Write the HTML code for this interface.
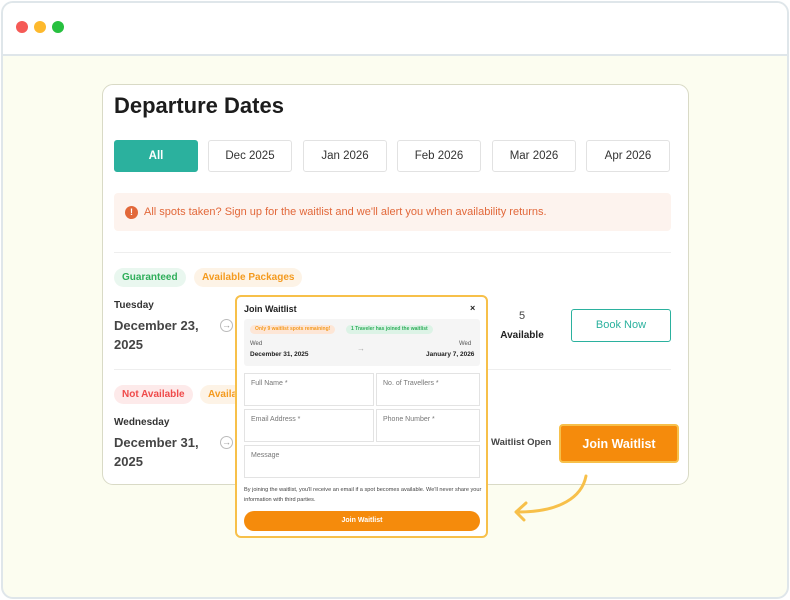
<!DOCTYPE html>
<html><head><style>
*{box-sizing:border-box;margin:0;padding:0}
body{width:790px;height:600px;background:#fff;font-family:"Liberation Sans",sans-serif;position:relative;overflow:hidden}
.a{position:absolute}
.frame{left:1px;top:1px;width:788px;height:598px;border:2px solid #dfe6ea;border-radius:12px;background:#fcfdf0;overflow:hidden}
.bar{left:0;top:0;width:784px;height:53px;background:#fff;border-bottom:2px solid #dfe6ea}
.dot{width:12px;height:12px;border-radius:50%;top:18px}
.card{left:102px;top:84px;width:587px;height:401px;background:#fff;border:1px solid #d9dac6;border-radius:11px}
.tab{top:140px;width:84px;height:32px;border:1px solid #e2e2e2;border-radius:3px;font-size:11.5px;color:#333;text-align:center;line-height:31px}
.pill{height:19px;border-radius:10px;font-size:10px;font-weight:bold;line-height:19px;padding:0 8px}
.t{color:#333}
.circ{width:13px;height:13px;border:1px solid #bbb;border-radius:50%;font-size:9px;color:#999;text-align:center;line-height:11px}
.fld{border:1px solid #e3e3e3;font-size:7px;color:#777;padding:6px 6px;background:#fff}
</style></head><body>
<div class="a frame">
<div class="a bar"></div>
<div class="a dot" style="left:13px;background:#f55a56"></div>
<div class="a dot" style="left:31px;background:#fdb92d"></div>
<div class="a dot" style="left:49px;background:#27c03f"></div>
</div>
<div class="a card"></div>
<div class="a" style="left:114px;top:93px;font-size:22px;font-weight:bold;color:#1c1c1c">Departure Dates</div>
<div class="a tab" style="left:114px;background:#2bb19e;border-color:#2bb19e;color:#fff;font-weight:bold">All</div>
<div class="a tab" style="left:208px">Dec 2025</div>
<div class="a tab" style="left:303px">Jan 2026</div>
<div class="a tab" style="left:397px">Feb 2026</div>
<div class="a tab" style="left:492px">Mar 2026</div>
<div class="a tab" style="left:586px">Apr 2026</div>
<div class="a" style="left:114px;top:193px;width:557px;height:38px;background:#fdf3ee;border-radius:4px"></div>
<div class="a" style="left:125px;top:206px;width:13px;height:13px;border-radius:50%;background:#e2683a;color:#fff;font-size:9px;font-weight:bold;text-align:center;line-height:13px">!</div>
<div class="a" style="left:144px;top:206px;font-size:11px;color:#e2683a">All spots taken? Sign up for the waitlist and we'll alert you when availability returns.</div>
<div class="a" style="left:114px;top:252px;width:557px;height:1px;background:#eee"></div>
<div class="a pill" style="left:114px;top:268px;background:#e9f7ef;color:#2fae5a">Guaranteed</div>
<div class="a pill" style="left:194px;top:268px;background:#fdf3e6;color:#f49a1e">Available Packages</div>
<div class="a t" style="left:114px;top:300px;font-size:10px;font-weight:bold">Tuesday</div>
<div class="a t" style="left:114px;top:316px;font-size:13px;font-weight:bold;line-height:19px;color:#444">December 23,<br>2025</div>
<div class="a circ" style="left:220px;top:319px">→</div>
<div class="a t" style="left:497px;top:307px;width:50px;text-align:center;font-size:11px;line-height:19px"><span style="color:#444">5</span><br><b style="font-size:10px;color:#222">Available</b></div>
<div class="a" style="left:571px;top:309px;width:100px;height:33px;border:1.5px solid #2bb19e;border-radius:3px;color:#2bb19e;font-size:11px;text-align:center;line-height:31px">Book Now</div>
<div class="a" style="left:114px;top:369px;width:557px;height:1px;background:#eee"></div>
<div class="a pill" style="left:114px;top:385px;background:#fdeaea;color:#ef4a4a">Not Available</div>
<div class="a pill" style="left:200px;top:385px;background:#fdf3e6;color:#f49a1e">Available Packages</div>
<div class="a t" style="left:114px;top:417px;font-size:10px;font-weight:bold">Wednesday</div>
<div class="a t" style="left:114px;top:433px;font-size:13px;font-weight:bold;line-height:19px;color:#444">December 31,<br>2025</div>
<div class="a circ" style="left:220px;top:436px">→</div>
<div class="a" style="left:491px;top:437px;font-size:9.5px;font-weight:bold;color:#444">Waitlist Open</div>
<div class="a" style="left:559px;top:424px;width:120px;height:39px;background:#f58b0c;border:2px solid #f7c04a;border-radius:4px;color:#fff;font-size:12.5px;font-weight:bold;text-align:center;line-height:36px">Join Waitlist</div>
<svg class="a" style="left:510px;top:472px" width="80" height="50"><path d="M76 4 C72 25 50 40 8 40" fill="none" stroke="#f7c04a" stroke-width="3" stroke-linecap="round"/><path d="M16 31 L6 40 L14 48" fill="none" stroke="#f7c04a" stroke-width="3" stroke-linecap="round" stroke-linejoin="round"/></svg>
<div class="a" style="left:235px;top:295px;width:253px;height:243px;background:#fff;border:2px solid #f7c04a;border-radius:6px"></div>
<div class="a" style="left:244px;top:304px;font-size:9px;font-weight:bold;color:#222">Join Waitlist</div>
<div class="a" style="left:470px;top:303px;font-size:9px;font-weight:bold;color:#222">×</div>
<div class="a" style="left:244px;top:319px;width:236px;height:47px;background:#f5f5f5;border-radius:3px"></div>
<div class="a" style="left:250px;top:325px;height:9px;padding:0 5px;border-radius:5px;background:#fde6d6;color:#f49a1e;font-size:5px;font-weight:bold;line-height:9px">Only 9 waitlist spots remaining!</div>
<div class="a" style="left:346px;top:325px;height:9px;padding:0 5px;border-radius:5px;background:#dcf3e6;color:#2fae5a;font-size:5px;font-weight:bold;line-height:9px">1 Traveler has joined the waitlist</div>
<div class="a" style="left:250px;top:341px;font-size:6px;color:#555">Wed</div>
<div class="a" style="left:250px;top:351px;font-size:6.5px;font-weight:bold;color:#222">December 31, 2025</div>
<div class="a" style="left:357px;top:344px;font-size:8px;color:#aaa">→</div>
<div class="a" style="left:459px;top:341px;font-size:6px;color:#555">Wed</div>
<div class="a" style="left:426px;top:351px;font-size:6.5px;font-weight:bold;color:#222">January 7, 2026</div>
<div class="a fld" style="left:244px;top:373px;width:130px;height:33px">Full Name *</div>
<div class="a fld" style="left:376px;top:373px;width:104px;height:33px">No. of Travellers *</div>
<div class="a fld" style="left:244px;top:409px;width:130px;height:33px">Email Address *</div>
<div class="a fld" style="left:376px;top:409px;width:104px;height:33px">Phone Number *</div>
<div class="a fld" style="left:244px;top:445px;width:236px;height:33px">Message</div>
<div class="a" style="left:244px;top:485px;width:238px;font-size:5.6px;line-height:10px;color:#444">By joining the waitlist, you'll receive an email if a spot becomes available. We'll never share your information with third parties.</div>
<div class="a" style="left:244px;top:511px;width:236px;height:20px;background:#f58b0c;border-radius:10px;color:#fff;font-size:7px;font-weight:bold;text-align:center;line-height:20px">Join Waitlist</div>
</body></html>
